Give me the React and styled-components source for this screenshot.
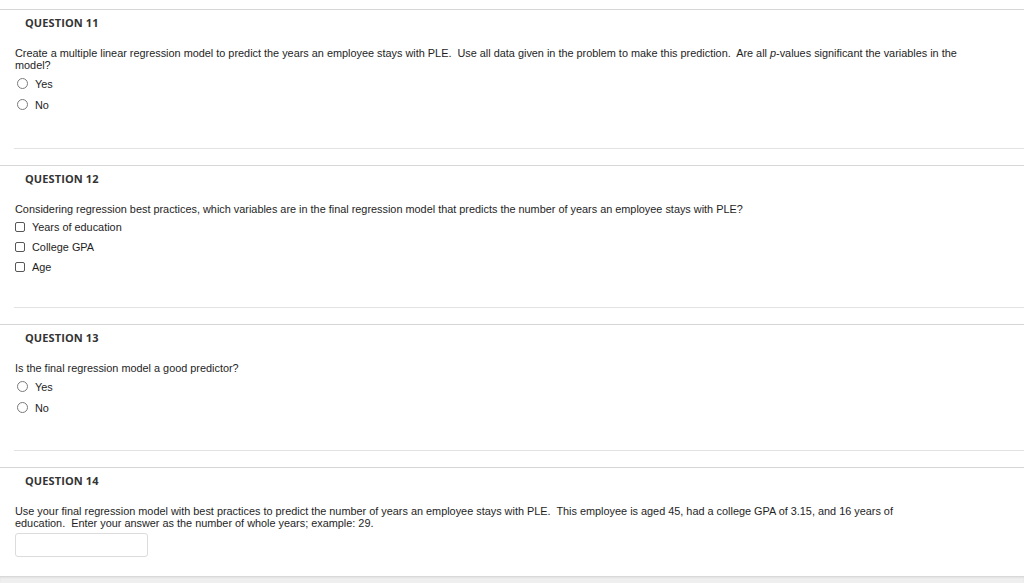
import React from "react";
import styled, { createGlobalStyle } from "styled-components";

const Global = createGlobalStyle`
  html, body { margin: 0; padding: 0; background: #fff; }
  body { font-family: "Liberation Sans", Arial, sans-serif; color: #1e1e1e; }
`;

const Page = styled.div`
  padding-top: 9px;
  width: 1024px;
`;

const Question = styled.section`
  border-top: 1px solid #d6d6d6;
  margin-bottom: ${(p) => (p.$last ? "0" : "16px")};
`;

const Header = styled.h3`
  margin: 0;
  padding: 5px 0 0 25px;
  font-family: "Open Sans", sans-serif;
  font-weight: 700;
  font-size: 11px;
  line-height: 15px;
  color: #333;
  letter-spacing: 0.1px;
`;

const Body = styled.div`
  margin-left: 14px;
  padding: 0 0 ${(p) => p.$pad}px 1px;
  border-bottom: ${(p) => (p.$noLine ? "none" : "1px solid #e2e2e2")};
`;

const Prompt = styled.p`
  margin: 17px 0 0;
  font-size: 10.88px;
  line-height: 12px;
  color: #1e1e1e;
  white-space: nowrap;
`;

const Options = styled.div`
  margin-top: 2px;
  display: flex;
  flex-direction: column;
`;

const Option = styled.label`
  display: flex;
  align-items: center;
  height: ${(p) => p.$h}px;
  font-size: 10.88px;
  line-height: 12px;
  color: #1e1e1e;
`;

const Radio = styled.span`
  box-sizing: border-box;
  width: 11px;
  height: 11px;
  border: 1px solid #7a7a7a;
  border-radius: 50%;
  background: #fff;
  margin: 0 7px 0 2px;
  flex: none;
`;

const Check = styled.span`
  box-sizing: border-box;
  width: 10px;
  height: 10px;
  border: 1px solid #555;
  border-radius: 2px;
  background: #fff;
  margin: 0 7px 0 0;
  flex: none;
`;

const Answer = styled.div`
  box-sizing: border-box;
  margin-top: 4px;
  width: 133px;
  height: 24px;
  border: 1px solid #dcdcdc;
  border-radius: 3px;
  background: #fff;
`;

const Footer = styled.div`
  margin-top: 19px;
  height: 20px;
  background: #efefef;
  border-top: 1px solid #d9d9d9;
  box-shadow: inset 0 1px 2px rgba(0, 0, 0, 0.06);
`;

const RadioList = ({ items }) => (
  <Options>
    {items.map((t) => (
      <Option key={t} $h={21}>
        <Radio />
        {t}
      </Option>
    ))}
  </Options>
);

const CheckList = ({ items }) => (
  <Options>
    {items.map((t) => (
      <Option key={t} $h={20}>
        <Check />
        {t}
      </Option>
    ))}
  </Options>
);

export default function App() {
  return (
    <>
      <Global />
      <Page>
        <Question>
          <Header>QUESTION 11</Header>
          <Body $pad={33}>
            <Prompt>
              Create a multiple linear regression model to predict the years an employee stays with PLE.&nbsp; Use all data given in the problem to make this prediction.&nbsp; Are all <i>p</i>-values significant the variables in the
              <br />
              model?
            </Prompt>
            <RadioList items={["Yes", "No"]} />
          </Body>
        </Question>

        <Question>
          <Header>QUESTION 12</Header>
          <Body $pad={30}>
            <Prompt>
              Considering regression best practices, which variables are in the final regression model that predicts the number of years an employee stays with PLE?
            </Prompt>
            <CheckList items={["Years of education", "College GPA", "Age"]} />
          </Body>
        </Question>

        <Question>
          <Header>QUESTION 13</Header>
          <Body $pad={32}>
            <Prompt>Is the final regression model a good predictor?</Prompt>
            <RadioList items={["Yes", "No"]} />
          </Body>
        </Question>

        <Question $last>
          <Header>QUESTION 14</Header>
          <Body $pad={0} $noLine>
            <Prompt>
              Use your final regression model with best practices to predict the number of years an employee stays with PLE.&nbsp; This employee is aged 45, had a college GPA of 3.15, and 16 years of
              <br />
              education.&nbsp; Enter your answer as the number of whole years; example: 29.
            </Prompt>
            <Answer />
          </Body>
        </Question>
        <Footer />
      </Page>
    </>
  );
}
